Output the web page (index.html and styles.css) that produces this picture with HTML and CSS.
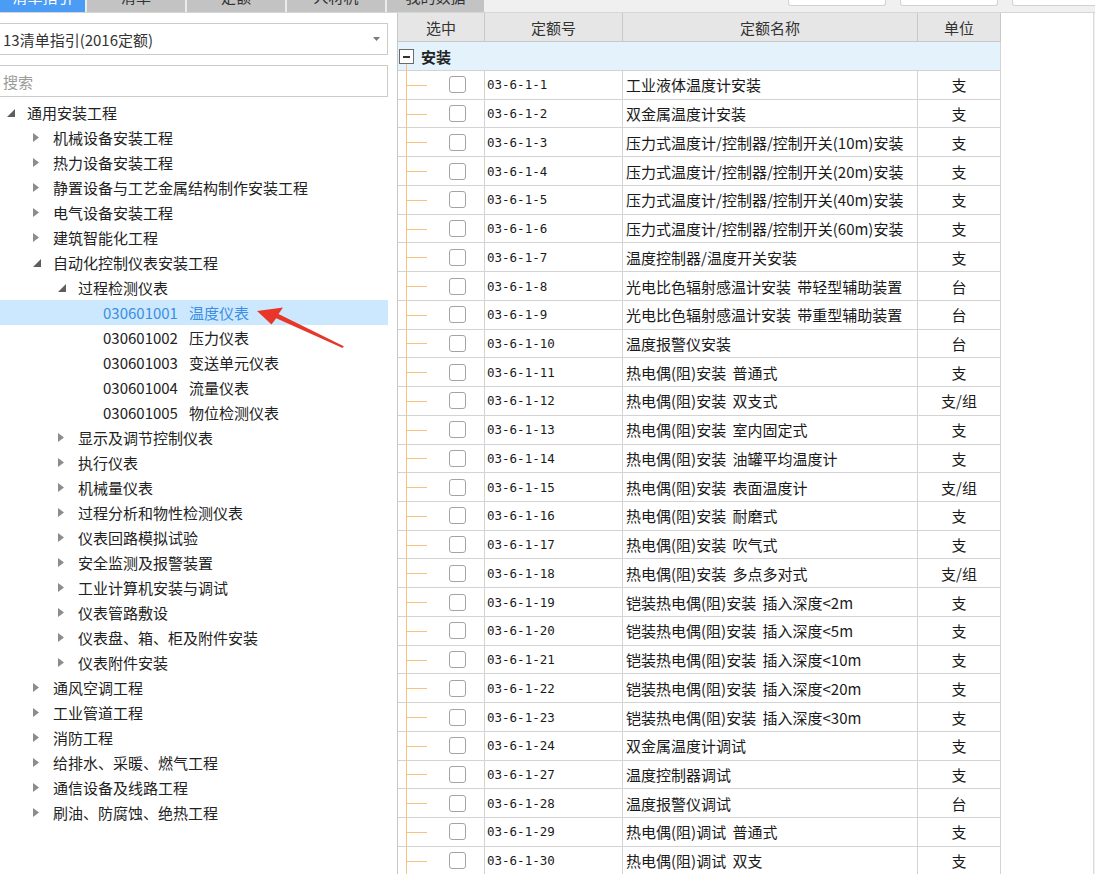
FILE: index.html
```html
<!DOCTYPE html>
<html lang="zh-CN">
<head>
<meta charset="utf-8">
<title>清单指引</title>
<link rel="stylesheet" href="styles.css">
</head>
<body>
<div class="app">
  <header class="topbar">
    <nav class="tabs">
      <div class="tab active"><span>清单指引</span></div>
      <div class="tab"><span>清单</span></div>
      <div class="tab"><span>定额</span></div>
      <div class="tab"><span>人材机</span></div>
      <div class="tab"><span>我的数据</span></div>
    </nav>
    <div class="tools">
      <span class="tool"></span>
      <span class="tool"></span>
      <span class="tool"></span>
    </div>
  </header>
  <main class="main">
    <aside class="left">
      <div class="select">
        <span>13清单指引(2016定额)</span>
        <svg class="caret" width="7" height="4" viewBox="0 0 7 4"><path d="M0 0H7L3.5 4Z" fill="#7a7a7a"/></svg>
      </div>
      <div class="search">搜索</div>
      <ul class="tree">
        <li class="node l0"><span class="tog"><svg width="8" height="8" viewBox="0 0 8 8"><path d="M8 0V8H0Z" fill="#5e5e5e"/></svg></span>通用安装工程</li>
        <li class="node l1"><span class="tog"><svg width="6" height="9" viewBox="0 0 6 9"><path d="M0 0L6 4.5L0 9Z" fill="#8c8c8c"/></svg></span>机械设备安装工程</li>
        <li class="node l1"><span class="tog"><svg width="6" height="9" viewBox="0 0 6 9"><path d="M0 0L6 4.5L0 9Z" fill="#8c8c8c"/></svg></span>热力设备安装工程</li>
        <li class="node l1"><span class="tog"><svg width="6" height="9" viewBox="0 0 6 9"><path d="M0 0L6 4.5L0 9Z" fill="#8c8c8c"/></svg></span>静置设备与工艺金属结构制作安装工程</li>
        <li class="node l1"><span class="tog"><svg width="6" height="9" viewBox="0 0 6 9"><path d="M0 0L6 4.5L0 9Z" fill="#8c8c8c"/></svg></span>电气设备安装工程</li>
        <li class="node l1"><span class="tog"><svg width="6" height="9" viewBox="0 0 6 9"><path d="M0 0L6 4.5L0 9Z" fill="#8c8c8c"/></svg></span>建筑智能化工程</li>
        <li class="node l1"><span class="tog"><svg width="8" height="8" viewBox="0 0 8 8"><path d="M8 0V8H0Z" fill="#5e5e5e"/></svg></span>自动化控制仪表安装工程</li>
        <li class="node l2"><span class="tog"><svg width="8" height="8" viewBox="0 0 8 8"><path d="M8 0V8H0Z" fill="#5e5e5e"/></svg></span>过程检测仪表</li>
        <li class="node l3 sel"><span class="tog"></span><span class="num">030601001</span>温度仪表</li>
        <li class="node l3"><span class="tog"></span><span class="num">030601002</span>压力仪表</li>
        <li class="node l3"><span class="tog"></span><span class="num">030601003</span>变送单元仪表</li>
        <li class="node l3"><span class="tog"></span><span class="num">030601004</span>流量仪表</li>
        <li class="node l3"><span class="tog"></span><span class="num">030601005</span>物位检测仪表</li>
        <li class="node l2"><span class="tog"><svg width="6" height="9" viewBox="0 0 6 9"><path d="M0 0L6 4.5L0 9Z" fill="#8c8c8c"/></svg></span>显示及调节控制仪表</li>
        <li class="node l2"><span class="tog"><svg width="6" height="9" viewBox="0 0 6 9"><path d="M0 0L6 4.5L0 9Z" fill="#8c8c8c"/></svg></span>执行仪表</li>
        <li class="node l2"><span class="tog"><svg width="6" height="9" viewBox="0 0 6 9"><path d="M0 0L6 4.5L0 9Z" fill="#8c8c8c"/></svg></span>机械量仪表</li>
        <li class="node l2"><span class="tog"><svg width="6" height="9" viewBox="0 0 6 9"><path d="M0 0L6 4.5L0 9Z" fill="#8c8c8c"/></svg></span>过程分析和物性检测仪表</li>
        <li class="node l2"><span class="tog"><svg width="6" height="9" viewBox="0 0 6 9"><path d="M0 0L6 4.5L0 9Z" fill="#8c8c8c"/></svg></span>仪表回路模拟试验</li>
        <li class="node l2"><span class="tog"><svg width="6" height="9" viewBox="0 0 6 9"><path d="M0 0L6 4.5L0 9Z" fill="#8c8c8c"/></svg></span>安全监测及报警装置</li>
        <li class="node l2"><span class="tog"><svg width="6" height="9" viewBox="0 0 6 9"><path d="M0 0L6 4.5L0 9Z" fill="#8c8c8c"/></svg></span>工业计算机安装与调试</li>
        <li class="node l2"><span class="tog"><svg width="6" height="9" viewBox="0 0 6 9"><path d="M0 0L6 4.5L0 9Z" fill="#8c8c8c"/></svg></span>仪表管路敷设</li>
        <li class="node l2"><span class="tog"><svg width="6" height="9" viewBox="0 0 6 9"><path d="M0 0L6 4.5L0 9Z" fill="#8c8c8c"/></svg></span>仪表盘、箱、柜及附件安装</li>
        <li class="node l2"><span class="tog"><svg width="6" height="9" viewBox="0 0 6 9"><path d="M0 0L6 4.5L0 9Z" fill="#8c8c8c"/></svg></span>仪表附件安装</li>
        <li class="node l1"><span class="tog"><svg width="6" height="9" viewBox="0 0 6 9"><path d="M0 0L6 4.5L0 9Z" fill="#8c8c8c"/></svg></span>通风空调工程</li>
        <li class="node l1"><span class="tog"><svg width="6" height="9" viewBox="0 0 6 9"><path d="M0 0L6 4.5L0 9Z" fill="#8c8c8c"/></svg></span>工业管道工程</li>
        <li class="node l1"><span class="tog"><svg width="6" height="9" viewBox="0 0 6 9"><path d="M0 0L6 4.5L0 9Z" fill="#8c8c8c"/></svg></span>消防工程</li>
        <li class="node l1"><span class="tog"><svg width="6" height="9" viewBox="0 0 6 9"><path d="M0 0L6 4.5L0 9Z" fill="#8c8c8c"/></svg></span>给排水、采暖、燃气工程</li>
        <li class="node l1"><span class="tog"><svg width="6" height="9" viewBox="0 0 6 9"><path d="M0 0L6 4.5L0 9Z" fill="#8c8c8c"/></svg></span>通信设备及线路工程</li>
        <li class="node l1"><span class="tog"><svg width="6" height="9" viewBox="0 0 6 9"><path d="M0 0L6 4.5L0 9Z" fill="#8c8c8c"/></svg></span>刷油、防腐蚀、绝热工程</li>
      </ul>
    </aside>
    <section class="grid">
      <div class="row head"><div class="c">选中</div><div class="c">定额号</div><div class="c">定额名称</div><div class="c">单位</div></div>
      <div class="row group"><div class="c"><span class="minus"></span><b>安装</b></div></div>
      <div class="row"><div class="c pick"><span class="cb"></span></div><div class="c code">03-6-1-1</div><div class="c name">工业液体温度计安装</div><div class="c unit">支</div></div>
      <div class="row"><div class="c pick"><span class="cb"></span></div><div class="c code">03-6-1-2</div><div class="c name">双金属温度计安装</div><div class="c unit">支</div></div>
      <div class="row"><div class="c pick"><span class="cb"></span></div><div class="c code">03-6-1-3</div><div class="c name">压力式温度计/控制器/控制开关(10m)安装</div><div class="c unit">支</div></div>
      <div class="row"><div class="c pick"><span class="cb"></span></div><div class="c code">03-6-1-4</div><div class="c name">压力式温度计/控制器/控制开关(20m)安装</div><div class="c unit">支</div></div>
      <div class="row"><div class="c pick"><span class="cb"></span></div><div class="c code">03-6-1-5</div><div class="c name">压力式温度计/控制器/控制开关(40m)安装</div><div class="c unit">支</div></div>
      <div class="row"><div class="c pick"><span class="cb"></span></div><div class="c code">03-6-1-6</div><div class="c name">压力式温度计/控制器/控制开关(60m)安装</div><div class="c unit">支</div></div>
      <div class="row"><div class="c pick"><span class="cb"></span></div><div class="c code">03-6-1-7</div><div class="c name">温度控制器/温度开关安装</div><div class="c unit">支</div></div>
      <div class="row"><div class="c pick"><span class="cb"></span></div><div class="c code">03-6-1-8</div><div class="c name">光电比色辐射感温计安装 带轻型辅助装置</div><div class="c unit">台</div></div>
      <div class="row"><div class="c pick"><span class="cb"></span></div><div class="c code">03-6-1-9</div><div class="c name">光电比色辐射感温计安装 带重型辅助装置</div><div class="c unit">台</div></div>
      <div class="row"><div class="c pick"><span class="cb"></span></div><div class="c code">03-6-1-10</div><div class="c name">温度报警仪安装</div><div class="c unit">台</div></div>
      <div class="row"><div class="c pick"><span class="cb"></span></div><div class="c code">03-6-1-11</div><div class="c name">热电偶(阻)安装 普通式</div><div class="c unit">支</div></div>
      <div class="row"><div class="c pick"><span class="cb"></span></div><div class="c code">03-6-1-12</div><div class="c name">热电偶(阻)安装 双支式</div><div class="c unit">支/组</div></div>
      <div class="row"><div class="c pick"><span class="cb"></span></div><div class="c code">03-6-1-13</div><div class="c name">热电偶(阻)安装 室内固定式</div><div class="c unit">支</div></div>
      <div class="row"><div class="c pick"><span class="cb"></span></div><div class="c code">03-6-1-14</div><div class="c name">热电偶(阻)安装 油罐平均温度计</div><div class="c unit">支</div></div>
      <div class="row"><div class="c pick"><span class="cb"></span></div><div class="c code">03-6-1-15</div><div class="c name">热电偶(阻)安装 表面温度计</div><div class="c unit">支/组</div></div>
      <div class="row"><div class="c pick"><span class="cb"></span></div><div class="c code">03-6-1-16</div><div class="c name">热电偶(阻)安装 耐磨式</div><div class="c unit">支</div></div>
      <div class="row"><div class="c pick"><span class="cb"></span></div><div class="c code">03-6-1-17</div><div class="c name">热电偶(阻)安装 吹气式</div><div class="c unit">支</div></div>
      <div class="row"><div class="c pick"><span class="cb"></span></div><div class="c code">03-6-1-18</div><div class="c name">热电偶(阻)安装 多点多对式</div><div class="c unit">支/组</div></div>
      <div class="row"><div class="c pick"><span class="cb"></span></div><div class="c code">03-6-1-19</div><div class="c name">铠装热电偶(阻)安装 插入深度&lt;2m</div><div class="c unit">支</div></div>
      <div class="row"><div class="c pick"><span class="cb"></span></div><div class="c code">03-6-1-20</div><div class="c name">铠装热电偶(阻)安装 插入深度&lt;5m</div><div class="c unit">支</div></div>
      <div class="row"><div class="c pick"><span class="cb"></span></div><div class="c code">03-6-1-21</div><div class="c name">铠装热电偶(阻)安装 插入深度&lt;10m</div><div class="c unit">支</div></div>
      <div class="row"><div class="c pick"><span class="cb"></span></div><div class="c code">03-6-1-22</div><div class="c name">铠装热电偶(阻)安装 插入深度&lt;20m</div><div class="c unit">支</div></div>
      <div class="row"><div class="c pick"><span class="cb"></span></div><div class="c code">03-6-1-23</div><div class="c name">铠装热电偶(阻)安装 插入深度&lt;30m</div><div class="c unit">支</div></div>
      <div class="row"><div class="c pick"><span class="cb"></span></div><div class="c code">03-6-1-24</div><div class="c name">双金属温度计调试</div><div class="c unit">支</div></div>
      <div class="row"><div class="c pick"><span class="cb"></span></div><div class="c code">03-6-1-27</div><div class="c name">温度控制器调试</div><div class="c unit">支</div></div>
      <div class="row"><div class="c pick"><span class="cb"></span></div><div class="c code">03-6-1-28</div><div class="c name">温度报警仪调试</div><div class="c unit">台</div></div>
      <div class="row"><div class="c pick"><span class="cb"></span></div><div class="c code">03-6-1-29</div><div class="c name">热电偶(阻)调试 普通式</div><div class="c unit">支</div></div>
      <div class="row"><div class="c pick"><span class="cb"></span></div><div class="c code">03-6-1-30</div><div class="c name">热电偶(阻)调试 双支</div><div class="c unit">支</div></div>
    </section>
    <div class="side"></div>
  </main>
  <svg class="pointer" width="1095" height="874" viewBox="0 0 1095 874">
    <polygon points="257,311 283,307.5 278.5,314 343.8,346.2 342.6,347.9 276.2,318.2 271.5,324.5" fill="#e8372a"/>
  </svg>
</div>
</body>
</html>
```

FILE: styles.css
```css
* {
  box-sizing: border-box;
  margin: 0;
  padding: 0;
}

html,
body {
  width: 1095px;
  height: 874px;
  overflow: hidden;
}

body {
  position: relative;
  background: #f0f0f0;
  color: #222;
  font-family: "Noto Sans CJK SC", "Noto Sans", sans-serif;
  font-size: 15px;
}

.app {
  display: flex;
  flex-direction: column;
  height: 874px;
}

/* top bar */
.topbar {
  display: flex;
  flex: none;
  height: 13px;
  background: #f0f0f0;
  border-bottom: 1px solid #d6d6d6;
  overflow: hidden;
}

.tabs {
  display: flex;
  flex: none;
  gap: 2px;
  width: 484px;
  background: #ececec;
}

.tab {
  width: 98px;
  height: 12px;
  background: #c3c3c3;
  color: #333;
  text-align: center;
  overflow: hidden;
}

.tab:first-child {
  width: 85px;
}

.tab:last-child {
  width: 97px;
}

.tab span {
  display: block;
  line-height: 24px;
  margin-top: -15px;
}

.tab.active {
  background: #4b9cf5;
  color: #fff;
}

.tools {
  display: flex;
  gap: 14px;
  margin-left: 304px;
}

.tool {
  flex: none;
  width: 98px;
  height: 6px;
  background: #fff;
  border: 1px solid #d2d2d2;
  border-top: 0;
  border-radius: 0 0 3px 3px;
}

/* main area */
.main {
  display: flex;
  flex: 1;
  min-height: 0;
  overflow: hidden;
}

.left {
  flex: none;
  width: 397px;
  background: #fff;
  padding-top: 10px;
}

.select,
.search {
  display: flex;
  align-items: center;
  width: 389px;
  height: 32px;
  margin-left: -1px;
  border: 1px solid #cbcbcb;
  background: #fff;
  padding-left: 3px;
}

.select {
  justify-content: space-between;
  padding-right: 7px;
  color: #333;
}

.search {
  margin-top: 10px;
  color: #9a9a9a;
}

.tree {
  list-style: none;
  margin-top: 3px;
}

.node {
  display: flex;
  align-items: center;
  width: 388px;
  height: 25px;
  white-space: nowrap;
  color: #222;
}

.node.l0 { padding-left: 7px; }
.node.l1 { padding-left: 33px; }
.node.l2 { padding-left: 58px; }
.node.l3 { padding-left: 83px; }

.tog {
  display: flex;
  align-items: center;
  flex: none;
  width: 20px;
  height: 25px;
}

.node.sel {
  background: #cce8ff;
  color: #3b8ee2;
}

.num {
  margin-right: 11px;
}

/* grid */
.grid {
  flex: none;
  width: 604px;
  background: #fff;
  border-left: 1px solid #c6c6c6;
  overflow: hidden;
}

.row {
  display: grid;
  grid-template-columns: 87px 138px 295px 83px;
  height: 28.74px;
}

.c {
  position: relative;
  display: flex;
  align-items: center;
  min-width: 0;
  border-right: 1px solid #d3d3d3;
  border-bottom: 1px solid #d3d3d3;
  white-space: nowrap;
  overflow: hidden;
}

.row.head {
  height: 29px;
  background: #e6e6e6;
}

.row.head .c {
  justify-content: center;
  color: #333;
  border-color: #c8c8c8;
}

.row.group {
  height: 29px;
  background: #e4f2fc;
}

.row.group .c {
  grid-column: 1 / -1;
  padding-left: 1px;
  overflow: visible;
}

.row.group b {
  margin-left: 7px;
  font-weight: 700;
  color: #222;
}

.minus {
  position: relative;
  width: 15px;
  height: 15px;
  border: 1px solid #6a6a6a;
  background: #fff;
}

.minus::after {
  content: "";
  position: absolute;
  left: 3px;
  top: 6px;
  width: 7px;
  height: 2px;
  background: #333;
}

.row.group .c::after {
  content: "";
  position: absolute;
  left: 8px;
  top: 22px;
  bottom: -1px;
  width: 1px;
  background: #f7c27e;
}

.pick {
  padding-left: 51px;
  overflow: visible;
}

.pick::before {
  content: "";
  position: absolute;
  left: 8px;
  top: 0;
  bottom: -1px;
  width: 1px;
  background: #f7c27e;
}

.pick::after {
  content: "";
  position: absolute;
  left: 8px;
  top: 50%;
  width: 21px;
  height: 1px;
  background: #f7c27e;
}

.cb {
  width: 17px;
  height: 17px;
  border: 1px solid #a4a4a4;
  border-radius: 3px;
  background: #fff;
}

.code {
  padding-left: 2px;
  font-family: "DejaVu Sans Mono", "Liberation Mono", monospace;
  font-size: 12.5px;
  color: #1a1a1a;
}

.name {
  padding-left: 3px;
  word-spacing: 3px;
  color: #1a1a1a;
}

.unit {
  justify-content: center;
  color: #1a1a1a;
}

.side {
  flex: 1;
  margin-right: 1px;
  background: #fff;
  border-right: 1px solid #dadada;
}

/* annotation overlay */
.pointer {
  position: absolute;
  left: 0;
  top: 0;
  pointer-events: none;
}
```
